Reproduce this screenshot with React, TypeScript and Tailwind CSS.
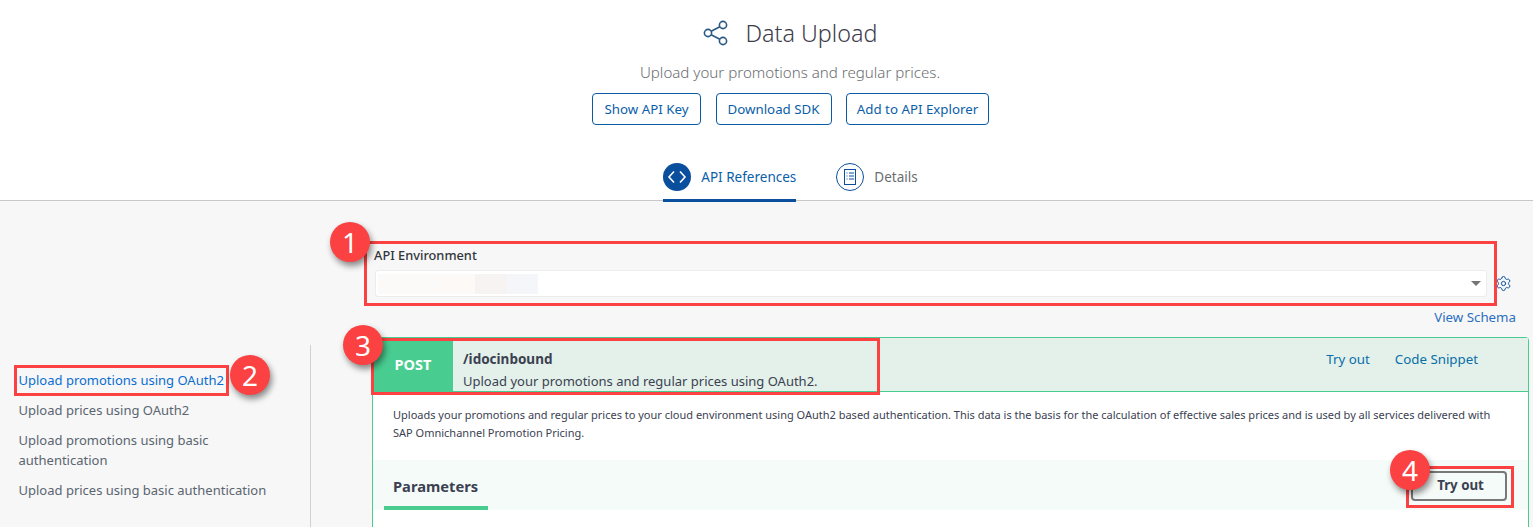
import { Settings } from "lucide-react";

const sideLinks = [
  "Upload prices using OAuth2",
  "Upload promotions using basic authentication",
  "Upload prices using basic authentication",
];

function HeaderButton({ label, className }: { label: string; className: string }) {
  return (
    <button className={`h-[32px] pt-[1px] rounded-[4px] border border-[#0a5aa5] bg-white text-[13.3px] text-[#0a5ea8] ${className}`}>
      {label}
    </button>
  );
}

function Badge({ n, className }: { n: number; className: string }) {
  return (
    <div
      className={`absolute w-[40px] h-[40px] rounded-full bg-[#fb4141] text-white text-[28px] leading-[40px] text-center shadow-[2px_4px_6px_rgba(0,0,0,0.45)] ${className}`}
    >
      {n}
    </div>
  );
}

function Callout({ className }: { className: string }) {
  return <div className={`absolute border-[3px] border-[#fb4141] ${className}`} />;
}

export default function App() {
  return (
    <div className="relative w-[1533px] h-[527px] overflow-hidden bg-[#f7f7f7] text-[#32363a] font-['Noto_Sans','Open_Sans',sans-serif]">
      <header className="h-[201px] pl-[47px] bg-white border-b border-[#c8c8c8] flex flex-col items-center">
        <div className="flex items-center mt-[18px] h-[30px]">
          <svg width="26" height="26" viewBox="0 0 26 26" fill="none" stroke="#2c5a85" strokeWidth="1.6">
            <circle cx="5" cy="13" r="3.6" />
            <circle cx="20" cy="5" r="3.6" />
            <circle cx="20" cy="21" r="3.6" />
            <path d="M8.2 11.3 16.8 6.7M8.2 14.7 16.8 19.3" />
          </svg>
          <h1 className="ml-[17px] text-[23.3px] font-light text-[#3c3c4a] leading-[30px]">Data Upload</h1>
        </div>
        <p className="mt-[14px] text-[15.1px] leading-[20px] font-light text-[#6a6d70]">
          Upload your promotions and regular prices.
        </p>
        <div className="flex gap-[14.5px] mt-[11px] ml-[1px]">
          <HeaderButton label="Show API Key" className="w-[109px]" />
          <HeaderButton label="Download SDK" className="w-[116px]" />
          <HeaderButton label="Add to API Explorer" className="w-[143px]" />
        </div>
        <nav className="flex gap-[40px] mt-[38px] ml-[1px]">
          <div className="h-[39px] border-b-[3px] border-[#0a4f9e] flex items-start gap-[10px] text-[#0a5ea8]">
            <span className="w-[28px] h-[28px] rounded-full bg-[#0a4f9e] flex items-center justify-center">
              <svg width="28" height="28" viewBox="0 0 28 28" fill="none" stroke="white" strokeWidth="1.6">
                <path d="M11 8.5 6 14l5 5.5M17 8.5l5 5.5-5 5.5" />
              </svg>
            </span>
            <span className="text-[13.5px] leading-[28px]">API References</span>
          </div>
          <div className="flex items-start gap-[10px] text-[#6a6d70]">
            <span className="w-[28px] h-[28px] rounded-full border border-[#0a4f9e] flex items-center justify-center">
              <svg width="14" height="16" viewBox="0 0 14 16" fill="none" stroke="#0a4f9e" strokeWidth="1">
                <rect x="1.5" y="0.5" width="11" height="15" />
                <path d="M3.5 4h1M6 4h5M3.5 7h1M6 7h5M3.5 10h1M6 10h5" />
              </svg>
            </span>
            <span className="text-[13.5px] leading-[28px]">Details</span>
          </div>
        </nav>
      </header>

      <div className="flex">
        <aside className="w-[311px] shrink-0 pt-[144px] pl-[18.5px] h-[326px] border-r border-[#d0d0d0] [clip-path:inset(144px_0_0_0)]">
          <ul className="w-[262px] flex flex-col gap-[10px] text-[13px] leading-[20px] text-[#5a6570] mt-[25px]">
            <li className="text-[#0a6ed1] whitespace-nowrap">Upload promotions using OAuth2</li>
            {sideLinks.map((l) => (
              <li key={l}>{l}</li>
            ))}
          </ul>
        </aside>

        <main className="ml-[61px] w-[1157px] pt-[44px]">
          <div className="pl-[2px] text-[12.8px] font-medium leading-[20px] text-[#32363a]">API Environment</div>
          <div className="flex items-center mt-[5px]">
            <div className="ml-[3px] w-[1112px] h-[27px] rounded-[3px] bg-white border border-[#ececec] flex items-center pl-[2px] pr-[5px]">
              <div className="h-[20px] w-[64px] bg-[#fbfaf9]" />
              <div className="h-[20px] w-[33px] bg-[#fdf9f6]" />
              <div className="h-[20px] w-[32px] bg-[#f8f3f3]" />
              <div className="h-[20px] w-[31px] bg-[#f4f6f9]" />
              <div className="ml-auto w-0 h-0 border-x-[5px] border-x-transparent border-t-[5px] border-t-[#757575]" />
            </div>
            <Settings size={17} strokeWidth={1.4} className="ml-[8px] text-[#0a4f9e]" />
          </div>
          <div className="mt-[11px] pr-[13px] text-right text-[13.3px] leading-[18px] text-[#2b6fc0]">View Schema</div>

          <section className="mt-[11px] border border-[#49cc90] rounded-t-[4px] border-b-0 bg-white h-[200px]">
            <div className="h-[54px] bg-[#e3f1ea] flex border-b border-[#49cc90]">
              <div className="w-[80px] bg-[#49cc90] text-white text-[14.5px] font-bold flex items-center justify-center">
                POST
              </div>
              <div className="pl-[10px] pt-[12px] flex-1">
                <div className="text-[13.5px] font-bold leading-[18px] text-[#3b4151]">/idocinbound</div>
                <div className="mt-[4px] text-[13px] leading-[18px] text-[#3b4151]">
                  Upload your promotions and regular prices using OAuth2.
                </div>
              </div>
              <div className="flex gap-[25px] pr-[50px] pt-[11px] text-[13.3px] leading-[20px] text-[#0a6ea8]">
                <span>Try out</span>
                <span>Code Snippet</span>
              </div>
            </div>
            <p className="h-[68px] px-[20px] pt-[14px] text-[11px] leading-[17.5px] text-[#3b4151]">
              Uploads your promotions and regular prices to your cloud environment using OAuth2 based authentication. This data is the basis for the calculation of effective sales prices and is used by all services delivered with SAP Omnichannel Promotion Pricing.
            </p>
            <div className="h-[50px] bg-[#f5fbf9] flex items-stretch justify-between pl-[11px] pr-[21px]">
              <div className="w-[104px] border-b-[4px] border-[#49cc90] pl-[9px] pt-[16px] text-[14.7px] font-bold leading-[20px] text-[#3b4151]">
                Parameters
              </div>
              <button className="self-center mt-[1px] pl-[3px] w-[96px] h-[30px] rounded-[4px] border-2 border-[#787878] text-[13.3px] font-bold text-[#3b4151]">
                Try out
              </button>
            </div>
          </section>
        </main>
      </div>

      <Callout className="left-[364px] top-[241px] w-[1133px] h-[65px]" />
      <Callout className="left-[14px] top-[365px] w-[215px] h-[31px]" />
      <Callout className="left-[371px] top-[338px] w-[509px] h-[57px]" />
      <Callout className="left-[1406px] top-[466px] w-[108px] h-[42px]" />
      <Badge n={1} className="left-[330px] top-[222px]" />
      <Badge n={2} className="left-[230px] top-[355px]" />
      <Badge n={3} className="left-[343px] top-[325px]" />
      <Badge n={4} className="left-[1390px] top-[450px]" />
    </div>
  );
}
